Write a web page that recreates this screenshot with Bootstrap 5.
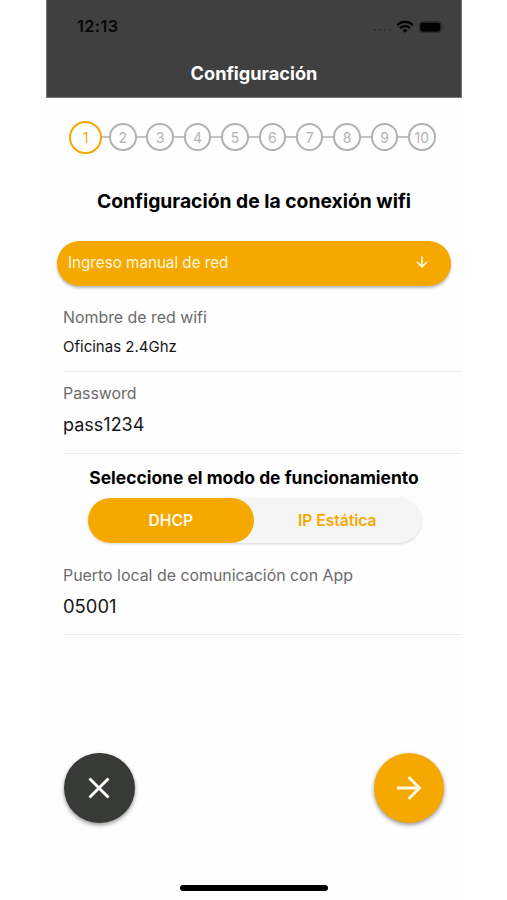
<!DOCTYPE html>
<html lang="es">
<head>
<meta charset="utf-8">
<meta name="viewport" content="width=device-width, initial-scale=1">
<title>Configuración</title>
<link href="https://cdn.jsdelivr.net/npm/bootstrap@5.3.0/dist/css/bootstrap.min.css" rel="stylesheet">
<style>
body{font-family:Inter,"Liberation Sans",sans-serif;background:#fff;color:#000;overflow:hidden}
.phone{width:416px;height:900px;margin-left:46px;background:#fefefe}
.top-bar{height:98px;background:#404040;border:1px solid #777;border-top:0}
.status-row{height:53px;padding:0 17px 0 30px}
.clock{font-size:16.3px;font-weight:600;color:#080808;letter-spacing:.4px}
.signal{gap:2.5px;margin:7px 5px 0 0}
.signal i{width:2.5px;height:2.5px;border-radius:50%;background:#2b2b2b}
.app-title{height:42px;font-size:18.2px;font-weight:650;line-height:41px;color:#fff}
.steps{height:78px;padding-left:23px}
.step{width:27.5px;height:27.5px;border:2px solid #b1b1b1;border-radius:50%;color:#b3b3b3;font-size:14px;flex:none}
.step.current{width:33px;height:33px;border-color:#f5a800;color:#f5a800}
.link-line{width:9.9px;height:2px;background:#c4c4c4;flex:none}
.link-line.first{width:7px}
.page-title{height:49px;line-height:50px;font-size:19.3px;font-weight:650}
.net-btn{height:45px;margin:15.5px 11px 0;padding:0 22px 0 11px;border:0;border-radius:23px;background:#f5a800;color:#fff7df;font-size:15.2px;box-shadow:0 2px 3px rgba(0,0,0,.28)}
.net-btn svg{margin-top:-2px}
.net-btn span{padding-top:1px}
.field{margin-left:17px;border-bottom:1.5px solid #ebebeb}
.field label{display:block;line-height:22px;font-size:15.9px;color:#6b6b6b}
.field .value{line-height:26px;font-size:18px;color:#161616}
.field .value.compact{font-size:15px}
.f-net{height:86.5px;padding-top:21.5px}
.f-net .value{padding-top:5px}
.f-pass{height:81.5px;padding-top:11px}
.f-pass .value{padding-top:7px}
.f-port{height:91.5px;padding-top:21.5px}
.f-port .value{padding-top:6px;font-size:18.4px}
.mode-title{height:44.5px;line-height:48px;font-size:17.45px;font-weight:650}
.modes{width:333px;height:45px;margin-left:41.5px;border-radius:23px;background:#f5f5f5;box-shadow:0 1px 3px rgba(0,0,0,.16)}
.modes button{border:0;background:none;color:#f5a800;font-size:15.6px;font-weight:600;border-radius:23px}
.modes button.on{background:#f5a800;color:#fff9e8}
.actions{margin-top:118px;padding:0 18px}
.fab{width:70.5px;height:70.5px;border:0;border-radius:50%;background:#f5a800;box-shadow:0 2px 4px rgba(0,0,0,.42)}
.fab.dark{background:#383a37}
.home-bar{width:148px;height:5.5px;margin:62px 0 0 134px;border-radius:3px;background:#000}
</style>
<script src="https://cdn.jsdelivr.net/npm/bootstrap@5.3.0/dist/js/bootstrap.bundle.min.js"></script>
</head>
<body>
<main class="phone">
  <header class="top-bar">
    <div class="status-row d-flex align-items-center justify-content-between">
      <span class="clock">12:13</span>
      <div class="d-flex align-items-center">
        <div class="signal d-flex"><i></i><i></i><i></i><i></i></div>
        <svg width="18" height="14" viewBox="0 0 18 14" fill="none" stroke="#000" stroke-width="2.2"><path d="M1.2 5.1a11.2 11.2 0 0 1 15.6 0M4 8.1a7.2 7.2 0 0 1 10 0"/><path d="M9 12.8 6.4 10.2a3.8 3.8 0 0 1 5.2 0z" fill="#000" stroke="none"/></svg>
        <svg class="ms-1" width="26" height="14" viewBox="0 0 26 14"><rect x=".8" y="1" width="23" height="12" rx="4" fill="#2d2d2d"/><rect x="2.2" y="2.8" width="20" height="8.6" rx="2.3"/><path d="M24.5 5v4q1.2-.5 1.2-2t-1.2-2" fill="#2d2d2d"/></svg>
      </div>
    </div>
    <h1 class="app-title text-center m-0">Configuración</h1>
  </header>

  <div class="steps d-flex align-items-center">
    <span class="step current d-flex align-items-center justify-content-center">1</span><span class="link-line first"></span>
    <span class="step d-flex align-items-center justify-content-center">2</span><span class="link-line"></span>
    <span class="step d-flex align-items-center justify-content-center">3</span><span class="link-line"></span>
    <span class="step d-flex align-items-center justify-content-center">4</span><span class="link-line"></span>
    <span class="step d-flex align-items-center justify-content-center">5</span><span class="link-line"></span>
    <span class="step d-flex align-items-center justify-content-center">6</span><span class="link-line"></span>
    <span class="step d-flex align-items-center justify-content-center">7</span><span class="link-line"></span>
    <span class="step d-flex align-items-center justify-content-center">8</span><span class="link-line"></span>
    <span class="step d-flex align-items-center justify-content-center">9</span><span class="link-line"></span>
    <span class="step d-flex align-items-center justify-content-center">10</span>
  </div>

  <h2 class="page-title text-center m-0">Configuración de la conexión wifi</h2>

  <div class="net-btn d-flex align-items-center justify-content-between" role="button">
    <span>Ingreso manual de red</span>
    <svg width="14" height="14" viewBox="0 0 14 14" fill="none" stroke="#fff7df" stroke-width="1.7"><path d="M7 1.5v10.2M2 7l5 4.8L12 7"/></svg>
  </div>

  <div class="field f-net"><label>Nombre de red wifi</label><div class="value compact">Oficinas 2.4Ghz</div></div>
  <div class="field f-pass"><label>Password</label><div class="value">pass1234</div></div>

  <h3 class="mode-title text-center m-0">Seleccione el modo de funcionamiento</h3>
  <div class="modes d-flex">
    <button class="on w-50 p-0">DHCP</button>
    <button class="w-50 p-0">IP Estática</button>
  </div>

  <div class="field f-port"><label>Puerto local de comunicación con App</label><div class="value">05001</div></div>

  <div class="actions d-flex justify-content-between">
    <button class="fab dark d-flex align-items-center justify-content-center p-0" aria-label="Cancelar"><svg width="24" height="24" viewBox="0 0 24 24" stroke="#fff" stroke-width="2.9"><path d="M2.5 2.5l19 19M21.5 2.5l-19 19"/></svg></button>
    <button class="fab d-flex align-items-center justify-content-center p-0" aria-label="Siguiente"><svg width="26" height="26" viewBox="0 0 26 26" fill="none" stroke="#fff9e8" stroke-width="2.9"><path d="M1 13h22M12.5 2l11 11-11 11"/></svg></button>
  </div>
  <div class="home-bar"></div>
</main>
</body>
</html>
